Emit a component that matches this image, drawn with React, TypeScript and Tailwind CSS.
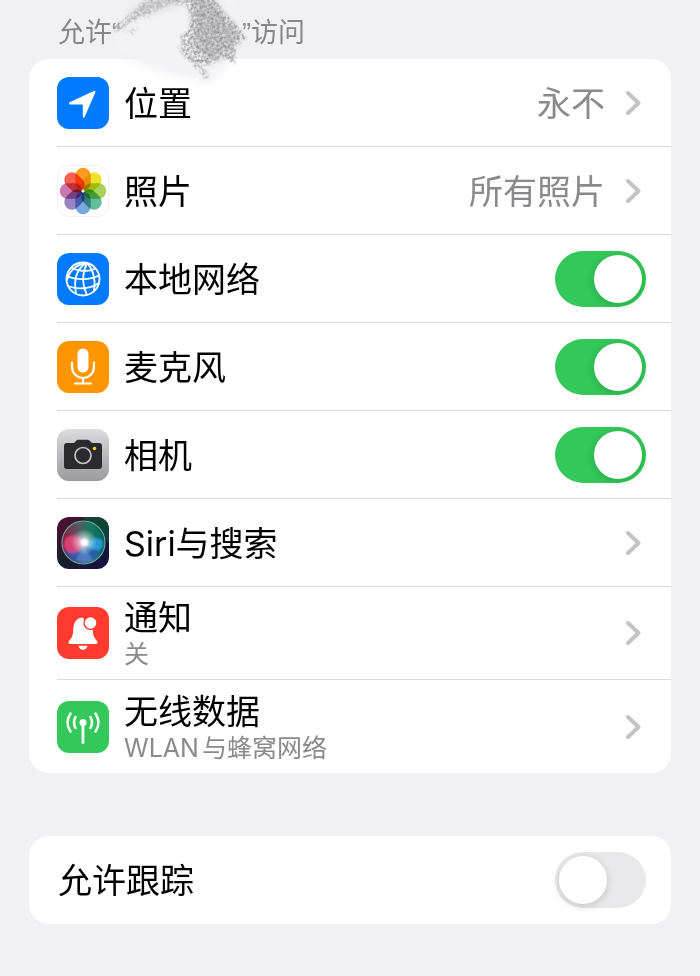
import { useId, useState, type ReactNode } from "react";

function Tile({ className = "", children }: { className?: string; children: ReactNode }) {
  return (
    <span className={`block size-[52px] shrink-0 overflow-hidden rounded-[12px] ${className}`}>
      <svg viewBox="0 0 52 52" className="block size-full" aria-hidden="true">
        {children}
      </svg>
    </span>
  );
}

const LocationIcon = () => (
  <Tile className="bg-[#007aff]">
    <path
      d="M12.600 25.200 36.800 14q2-.6 1.500 1.400L27.600 40q-1.200 1.600-1.800-.2V27.400H13q-2-.8-.4-2.200Z"
      fill="#fff"
    />
  </Tile>
);

const petals = ["#fb9d1e", "#eee32a", "#a9d25c", "#62bd98", "#78a8de", "#9684c4", "#c97bb0", "#f7604f"];

const PhotosIcon = () => (
  <Tile className="border border-[#f0f0f1] bg-white">
    <g className="isolate">
      {petals.map((color, i) => (
        <rect
          key={color}
          x="18"
          y="1.800"
          width="16"
          height="23.500"
          rx="8"
          fill={color}
          className="mix-blend-multiply"
          transform={`rotate(${i * 45} 26 26)`}
        />
      ))}
    </g>
    <circle cx="26" cy="26" r="1.500" fill="#fff" />
  </Tile>
);

const NetworkIcon = () => (
  <Tile className="bg-[#007aff]">
    <g fill="none" stroke="#fff" strokeWidth="1.800">
      <circle cx="26" cy="26" r="16.500" />
      <path d="M30 10C21 14 16 25 19 40M30 10C25 20 25 32 30 42M30 10C36 16 39 27 37 38M30 10C20 11 12 18 10 27" />
      <path d="M14 14.500C22 19 32 19 38.500 15.500M9.500 23C20 27.500 33 27 42 22.500M11 33C20 37 33 36 42 30" />
    </g>
  </Tile>
);

const MicIcon = () => (
  <Tile className="bg-[#ff9500]">
    <rect x="20.500" y="7.500" width="11" height="24" rx="5.500" fill="#fff" />
    <path
      d="M15 21.500v4.500a11 11 0 0 0 22 0V21.500M26 37v5.500M18 42.500h16"
      fill="none"
      stroke="#fff"
      strokeWidth="2.200"
      strokeLinecap="round"
    />
  </Tile>
);

const CameraIcon = () => (
  <Tile className="bg-linear-to-b from-[#dcdcde] to-[#9b9b9f]">
    <path
      d="M10 14h7l2.500-2.500q.8-.8 2-.8h9q1.200 0 2 .8L35 14h7q3 0 3 3v20q0 3-3 3H10q-3 0-3-3V17q0-3 3-3Z"
      fill="#2b2b2e"
    />
    <circle cx="26" cy="26.500" r="8" fill="none" stroke="#c3c3c6" strokeWidth="1.700" />
    <circle cx="37.500" cy="19.500" r="1.800" fill="#ffd60a" />
  </Tile>
);

const SiriIcon = () => (
  <Tile>
    <defs>
      <linearGradient id="siri-bg" x1="0" y1="0" x2="1" y2="1">
        <stop offset="0" stopColor="#5a0c30" />
        <stop offset="0.450" stopColor="#17202c" />
        <stop offset="1" stopColor="#141045" />
      </linearGradient>
      <linearGradient id="siri-orb" x1="0" y1="0.400" x2="1" y2="0.300">
        <stop offset="0" stopColor="#8f1a44" />
        <stop offset="0.450" stopColor="#4f5f62" />
        <stop offset="0.700" stopColor="#147a62" />
        <stop offset="1" stopColor="#075a58" />
      </linearGradient>
      <radialGradient id="siri-glow">
        <stop offset="0" stopColor="#fff" />
        <stop offset="0.250" stopColor="#fff" stopOpacity="0.700" />
        <stop offset="1" stopColor="#bdf3f0" stopOpacity="0" />
      </radialGradient>
      <filter id="siri-blur" x="-20%" y="-20%" width="140%" height="140%">
        <feGaussianBlur stdDeviation="0.800" />
      </filter>
    </defs>
    <rect width="52" height="52" fill="url(#siri-bg)" />
    <path d="M26 0h26v26Z" fill="#0b5a3c" opacity="0.600" />
    <circle cx="26.500" cy="25.500" r="21.500" fill="url(#siri-orb)" stroke="#6fae9c" strokeWidth="1.100" />
    <g filter="url(#siri-blur)">
      <path d="M8 32q5 13 18 14 13-1 18-13-9 1-17-6-8 8-19 5Z" fill="#2a5cb4" opacity="0.900" />
      <path d="M27 26q-5-8-11-8-9 1-9 9t9 9q7 0 11-10Z" fill="#ec4279" opacity="0.850" />
      <path d="M28 27q7-6 12-6 6 0 6 6t-6 6q-5 0-12-6Z" fill="#2f9be4" opacity="0.900" />
      <path d="m27 28 9 16-9 2-8-3Z" fill="#a9c4ee" opacity="0.300" />
    </g>
    <circle cx="27" cy="25" r="13" fill="url(#siri-glow)" />
    <circle cx="27.500" cy="25.500" r="3.500" fill="#fff" filter="url(#siri-blur)" />
  </Tile>
);

const BellIcon = () => (
  <Tile className="bg-[#ff3b30]">
    <path
      d="M25.500 10.500C18.500 11 16.500 17 16.300 22c-.2 7-1.800 9-4.300 12-1 1.400-.6 3 1.200 3h25.600c1.800 0 2.200-1.600 1.200-3-2.500-3-4.100-5-4.300-12Z"
      fill="#fff"
    />
    <circle cx="33.500" cy="16" r="7.200" fill="#ff3b30" />
    <circle cx="33.500" cy="16" r="5.800" fill="#fff" />
    <path d="M21.500 38.800h9q-.8 4-4.500 4t-4.500-4Z" fill="#fff" />
  </Tile>
);

const AntennaIcon = () => (
  <Tile className="bg-[#34c759]">
    <circle cx="26" cy="21.500" r="3.500" fill="#fff" />
    <g fill="none" stroke="#fff" strokeWidth="2.500" strokeLinecap="round">
      <path d="M26 22v19.500" strokeWidth="2.800" />
      <path d="M18.500 16q-3 5.500 0 11M13.500 12.500q-6 9 0 18M33.500 16q3 5.500 0 11M38.500 12.500q6 9 0 18" />
    </g>
  </Tile>
);

const Chevron = () => (
  <svg viewBox="0 0 16 26" className="mr-[30px] h-[26px] w-4 shrink-0" aria-hidden="true">
    <path
      d="M3 3 13.500 13 3 23"
      fill="none"
      stroke="#c5c5c7"
      strokeWidth="4"
      strokeLinecap="round"
      strokeLinejoin="round"
    />
  </svg>
);

function Switch({ id, initial }: { id: string; initial: boolean }) {
  const [on, setOn] = useState(initial);
  return (
    <span className="relative mr-[25px] block h-14 w-[91px] shrink-0">
      <input
        id={id}
        type="checkbox"
        role="switch"
        checked={on}
        onChange={(e) => setOn(e.target.checked)}
        className="peer block size-full cursor-pointer appearance-none rounded-full bg-[#e9e9eb] checked:bg-[#34c759]"
      />
      <span className="pointer-events-none absolute top-1 left-1 size-12 rounded-full bg-white shadow-[0_2px_8px_rgba(0,0,0,0.16)] peer-checked:right-1 peer-checked:left-auto" />
    </span>
  );
}

function LinkRow({ icon, title, detail, value }: { icon: ReactNode; title: string; detail?: string; value?: string }) {
  return (
    <li className="group flex pl-7">
      <button
        type="button"
        className={`flex flex-1 items-center border-[#d9d9db] text-left group-not-last:border-b ${detail ? "h-[93px]" : "h-[88px]"}`}
      >
        {icon}
        <span className="ml-[15px] flex flex-1 flex-col pt-0.5">
          <span className="text-[34px] leading-10">{title}</span>
          {detail && <span className="text-[25px] leading-8 text-[#8a8a8e] [text-autospace:normal]">{detail}</span>}
        </span>
        {value && <span className="mr-5 pt-0.5 text-[34px] leading-10 text-[#8a8a8e]">{value}</span>}
        <Chevron />
      </button>
    </li>
  );
}

function SwitchRow({ icon, title, initial }: { icon?: ReactNode; title: string; initial: boolean }) {
  const id = useId();
  return (
    <li className="group flex pl-7">
      <div className="flex h-[88px] flex-1 items-center border-[#d9d9db] group-not-last:border-b">
        {icon}
        <label htmlFor={id} className={`flex-1 pt-0.5 text-[34px] leading-10 ${icon ? "ml-[15px]" : "ml-px"}`}>
          {title}
        </label>
        <Switch id={id} initial={initial} />
      </div>
    </li>
  );
}

const Smudge = () => (
  <svg viewBox="0 0 160 100" className="pointer-events-none absolute top-0 left-[100px] h-[100px] w-40" aria-hidden="true">
    <defs>
      <filter id="soft" x="-20%" y="-20%" width="140%" height="140%">
        <feGaussianBlur stdDeviation="4" />
      </filter>
      <filter id="grain" filterUnits="userSpaceOnUse" x="-10" y="-20" width="180" height="130">
        <feTurbulence type="fractalNoise" baseFrequency="0.350" numOctaves="4" seed="9" result="n" />
        <feColorMatrix in="n" type="matrix" values="0 0 0 0 0  0 0 0 0 0  0 0 0 0 0  2 0 0 0 -0.550" result="mask" />
        <feTurbulence type="fractalNoise" baseFrequency="0.150" numOctaves="2" seed="3" result="w" />
        <feDisplacementMap in="SourceGraphic" in2="w" xChannelSelector="R" yChannelSelector="G" scale="7" result="d" />
        <feGaussianBlur in="d" stdDeviation="0.800" result="e" />
        <feComposite in="e" in2="mask" operator="in" />
      </filter>
    </defs>
    <path d="M18 30 56-10h80l4 38-6 30-24 26-50-12L12 52Z" fill="#f3f3f6" filter="url(#soft)" />
    <g opacity="0.450" filter="url(#soft)">
      <path d="M20 22 54-4h34l-6 8-24 6Z" fill="#bcbcc0" />
      <path d="M92-4h18l28 38-6 18-24 8-12-14Z" fill="#a4a4a8" />
    </g>
    <g filter="url(#grain)">
      <path d="M12 28 34 10 52-10h36l2 16-20-2-16 8-12 6-26 14Z" fill="#b2b2b6" />
      <path d="M88-10h18l20 24 20 24-12 8 2 18-10-6-20 8-20-8-6-20 10-10Z" fill="#98989c" />
      <path d="m76 46 30 32 3-2-17-22Z" fill="#a4a4a8" />
      <path d="M106-4 144 40" stroke="#98989c" strokeWidth="3" />
      <path d="m24 30 14-2-6 8Z" fill="#c8c8cc" />
    </g>
  </svg>
);

export default function App() {
  return (
    <main className="relative min-h-screen bg-[#f0f0f5] px-[29px] pb-[52px] font-[Inter,'Noto_Sans_CJK_SC',sans-serif] text-black">
      <h1 className="flex h-[59px] items-center pt-1.5 pl-[29px] font-['Liberation_Sans','Noto_Sans_CJK_SC',sans-serif] text-[27px] leading-10 text-[#86868b]">
        <span>允许“</span>
        <span className="ml-[121px]">”访问</span>
      </h1>
      <ul className="overflow-hidden rounded-[20px] bg-white">
        <LinkRow icon={<LocationIcon />} title="位置" value="永不" />
        <LinkRow icon={<PhotosIcon />} title="照片" value="所有照片" />
        <SwitchRow icon={<NetworkIcon />} title="本地网络" initial />
        <SwitchRow icon={<MicIcon />} title="麦克风" initial />
        <SwitchRow icon={<CameraIcon />} title="相机" initial />
        <LinkRow icon={<SiriIcon />} title="Siri与搜索" />
        <LinkRow icon={<BellIcon />} title="通知" detail="关" />
        <LinkRow icon={<AntennaIcon />} title="无线数据" detail="WLAN与蜂窝网络" />
      </ul>
      <ul className="mt-[63px] overflow-hidden rounded-[20px] bg-white">
        <SwitchRow title="允许跟踪" initial={false} />
      </ul>
      <Smudge />
    </main>
  );
}
